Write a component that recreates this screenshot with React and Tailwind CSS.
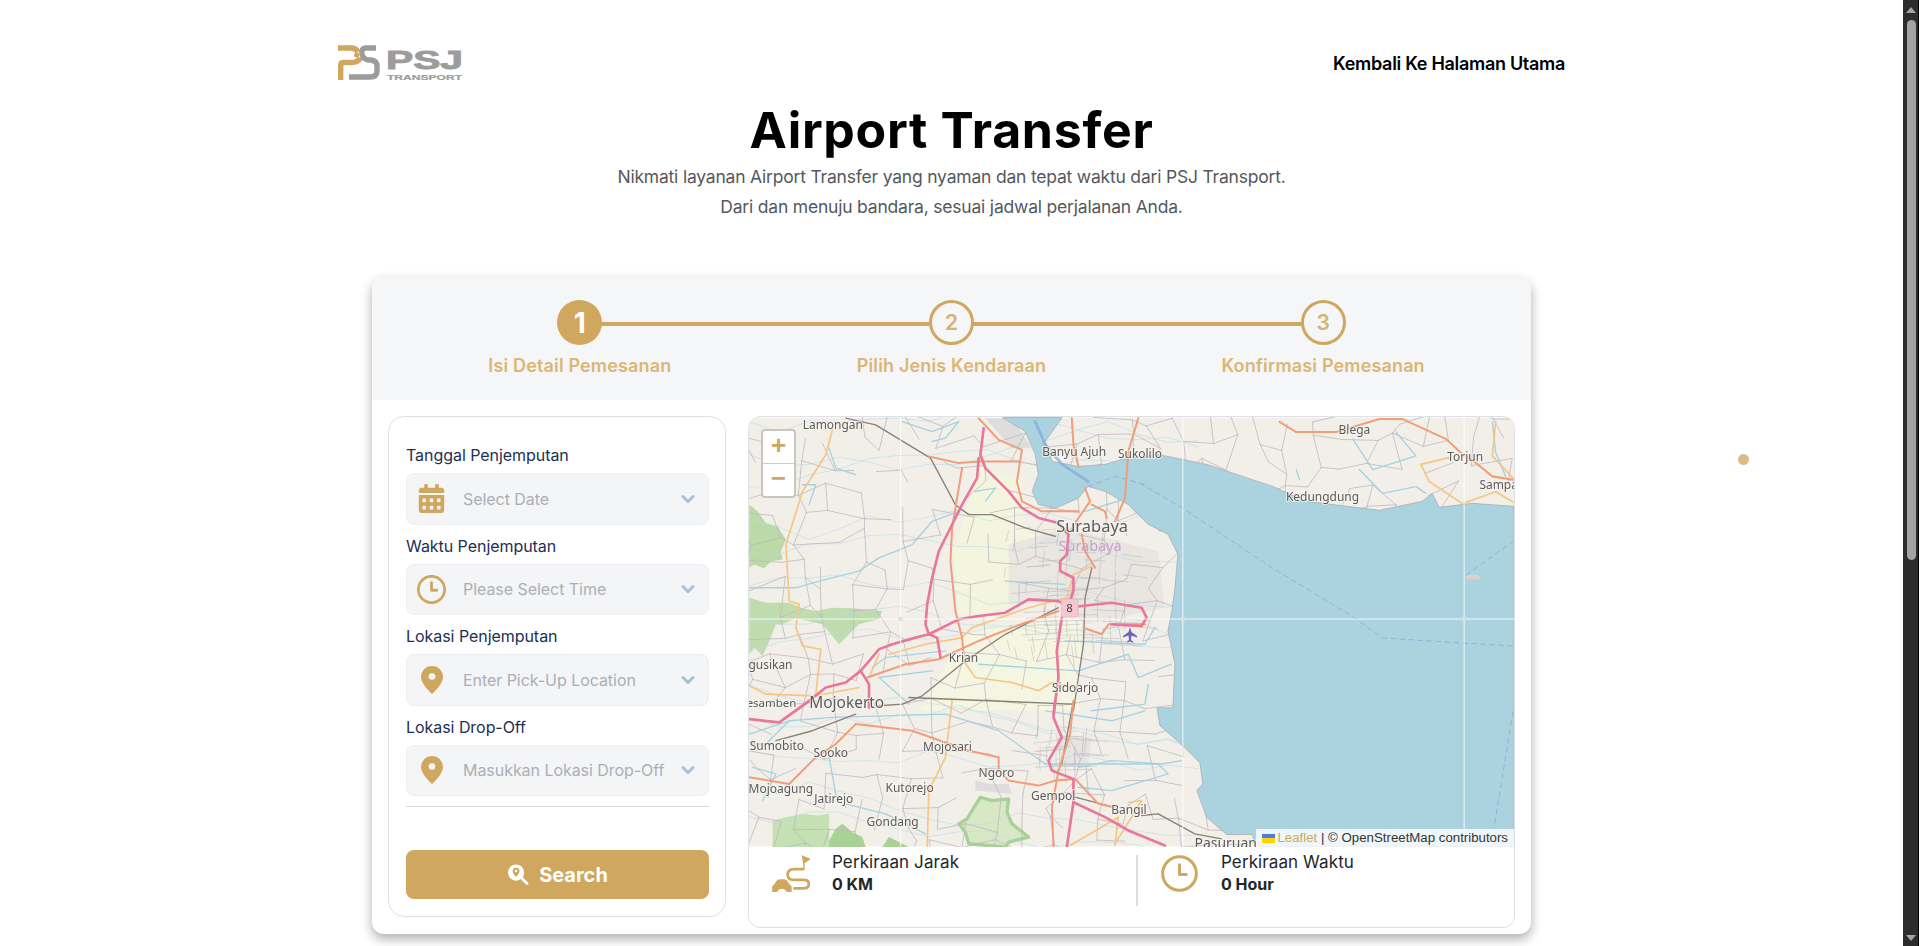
import { ChevronDown } from 'lucide-react';
import { FaCalendarAlt } from 'react-icons/fa';

const GOLD = '#cfa75e';

// map traced from the tiles, coords are 3x zoom crops (see groups below)
const motorways = [
  'M715 50 L705 130 L720 170 L790 240 L830 290 L880 320 L940 335 L970 370 L965 430 L945 450 L945 480 L985 500 L985 540 L975 570',
  'M700 140 L695 200 L650 280 L610 360 L580 420 L560 500 L545 580 L540 640 L550 670',
  'M150 900 L190 870 L240 830 L300 815 L345 780 L400 715 L440 700 L510 680 L550 670 L640 625 L700 615 L780 605 L850 565 L940 570 L975 590 L1010 585 L1100 575 L1190 590 L1205 620 L1190 645 L1100 640',
  'M550 670 L575 680 L585 740',
  'M345 780 L370 820 L370 890',
  'M950 620 L935 720 L940 800 L925 910',
];
const motorways2 = [
  'M10 55 L100 65 L190 0',
  'M930 0 L925 50 L950 110 L910 180 L920 210 L985 235 L985 305 L1080 350 L1150 390 L1260 435',
  'M985 305 L965 440',
];
const primary = [
  'M700 20 L760 85 L830 115 L815 210 L830 270 L890 300 L1000 300',
  'M550 135 L640 155 L700 150 L820 150',
  'M650 170 L620 350 L615 450 L630 600 L650 680 L655 740',
  'M1040 280 L1080 300 L1085 320',
  'M980 20 L985 100 L1000 165',
  'M1180 20 L1150 120 L1140 260 L1110 330',
  'M1020 230 L1035 270 L1000 320 L975 360',
  'M1010 370 L1020 420 L1050 470',
  'M1015 650 L1070 670 L1090 640 L1200 640',
  'M365 800 L480 760 L580 745 L700 690 L800 650 L940 600',
];
const primary2 = [
  'M330 70 L500 90 L670 150 L760 170 L760 210 L790 240 L880 255 L930 240 L990 235 L1060 310 L1105 320',
  'M330 70 L270 130 L210 170 L130 250 L10 230',
  'M985 0 L975 100 L940 210 L920 320 L925 440',
];
const secondary = [
  'M260 55 L240 130 L170 240 L120 400 L130 570 L160 580 L150 650 L170 705 L225 715 L210 850',
  'M10 825 L60 850 L210 855 L340 830',
  'M400 730 L370 800',
  'M1040 465 L985 490 L965 560 L850 590 L680 650 L650 680 L540 700 L430 730',
  'M655 750 L690 800 L800 815 L880 840 L920 815 L985 830',
];
const secondary2 = [
  'M620 0 L600 170 L550 270 L545 440',
  'M975 435 L1120 350 L1110 435',
  'M1110 430 L1160 350 L1190 300 L1150 305',
];
const rails = [
  'M300 20 L390 40 L555 140 L630 280 L670 310 L740 310 L840 350 L930 375',
  'M1040 470 L1020 560 L1015 700 L1000 800 L985 900',
  'M940 590 L780 670 L660 750 L530 855 L470 880 L400 885',
  'M490 860 L980 880',
];
const rails2 = [
  'M985 0 L950 190',
  'M990 290 L1105 320',
  'M1190 345 L1240 340 L1350 400 L1430 415',
  'M330 40 L200 90 L90 120',
];
const rivers = [
  'M470 30 L560 60 L640 30 L600 80 L560 90',
  'M10 530 L150 530 L220 510 L340 480 L400 440 L500 400 L560 330 L640 300',
  'M690 240 L750 230 L720 270',
  'M250 110 L270 170 L330 190',
  'M170 220 L210 220 L190 280',
  'M700 760 L1000 780 L1150 730 L1180 800 L1280 760',
  'M960 690 L1200 700 L1230 650',
  'M780 510 L960 520',
  'M1020 300 L1150 260',
  'M1040 900 L1200 880 L1210 820',
  'M490 880 L400 800 L560 780',
  'M380 770 L420 740 L600 720',
];
const rivers2 = [
  'M10 100 L130 60 L260 50 L600 40 L760 90 L900 190 L1240 190',
  'M20 200 L90 220 L50 300',
  'M300 310 L420 340 L540 400',
  'M900 30 L1100 60 L1200 30',
  'M1000 200 L1100 180 L1250 190 L1310 180',
  'M1000 260 L1100 270 L1270 220 L1240 190',
  'M250 170 L270 280 L300 320',
  'M130 60 L60 130 L20 130',
];
const labels = [
  ['Lamongan', 832, 423, 12],
  ['Banyu Ajuh', 1074, 450, 12],
  ['Sukolilo', 1140, 452, 12],
  ['Krian', 963, 657, 12],
  ['Ngusikan', 765, 664, 12],
  ['Kesamben', 767, 702, 11.5],
  ['Sidoarjo', 1075, 687, 12],
  ['Sumobito', 776, 745, 12],
  ['Sooko', 830, 752, 12],
  ['Mojosari', 947, 746, 12],
  ['Ngoro', 996, 772, 12],
  ['Mojoagung', 780, 788, 12],
  ['Kutorejo', 909, 787, 12],
  ['Gempol', 1053, 795, 12],
  ['Jatirejo', 833, 798, 12],
  ['Bangil', 1129, 809, 12],
  ['Gondang', 892, 821, 12],
  ['Blega', 1355, 428, 12],
  ['Torjun', 1466, 455, 12],
  ['Sampang', 1507, 483, 12],
  ['Kedungdung', 1323, 495, 12],
  ['Surabaya', 1092, 525, 16.5],
  ['Mojokerto', 846, 702, 15.5],
  ['Pasuruan', 1226, 843, 14],
];

// fixed jitter so the picture does not change between runs
const rnd = (i) => {
  const a = Math.sin(i * 12.9898) * 43758.5453;
  return a - Math.floor(a);
};

// village boundaries, thin net over all the land (sea is painted on top)
const netPoint = (c, r) => [
  748 + c * 27 + (rnd(c * 131 + r * 7) - 0.5) * 20,
  416 + r * 24 + (rnd(c * 17 + r * 211) - 0.5) * 18,
];
const net = (() => {
  let d = '';
  for (let c = 0; c < 30; c++) {
    for (let r = 0; r < 19; r++) {
      const [x, y] = netPoint(c, r);
      if (rnd(c * 53 + r * 29 + 1) > 0.42) {
        const [x2, y2] = netPoint(c + 1, r);
        d += `M${x} ${y} L${x2} ${y2}`;
      }
      if (rnd(c * 71 + r * 37 + 2) > 0.42) {
        const [x2, y2] = netPoint(c, r + 1);
        d += `M${x} ${y} L${x2} ${y2}`;
      }
    }
  }
  return d;
})();

const riverNet = Array.from({ length: 13 }, (_, i) => {
  let y = 420 + i * 33;
  let d = `M748 ${y}`;
  for (let s = 1; s < 16; s++) {
    y += (rnd(i * 40 + s) - 0.5) * 26;
    d += ` L${748 + s * 30} ${y}`;
  }
  return d;
});

// street mesh for the two towns
const mesh = Array.from({ length: 110 }, (_, i) => {
  const r1 = rnd(i + 1);
  const r2 = rnd(i * 6 + 3);
  const town = i < 80;
  const x = town ? 1005 + r1 * 120 : 1030 + r1 * 60;
  const y = town ? 525 + r2 * 125 : 725 + r2 * 45;
  return i % 2
    ? `M${x} ${y} l${14 + r2 * 26} ${r1 * 6 - 3}`
    : `M${x} ${y} l${r2 * 6 - 3} ${10 + r1 * 20}`;
});

const Lines = ({ data, color, width, dash, opacity = 1 }) => (
  <g fill="none" stroke={color} strokeWidth={width} strokeLinejoin="round" strokeLinecap="round" strokeDasharray={dash} opacity={opacity}>
    {data.map((d) => <path key={d} d={d} />)}
  </g>
);

const MapTiles = () => (
  <svg viewBox="748 416 767 430" className="block w-full h-full blur-[0.5px]">
    <rect x="748" y="416" width="767" height="430" fill="#f2efe9" />

    {/* farmland + towns */}
    <g transform="translate(745 410) scale(0.3333)">
      <path d="M700 170 L830 200 L835 340 L960 450 L960 560 L850 570 L700 610 L640 620 L625 420 Z" fill="#f4f5df" />
      <path d="M660 660 L960 610 L1010 640 L1000 900 L520 900 Z" fill="#f5f6e2" />
      <path d="M790 400 L960 350 L1240 420 L1260 590 L1020 640 L950 570 L790 580 Z" fill="#e6e3e0" opacity="0.8" />
      <path d="M720 20 L800 20 L860 110 L800 110 Z" fill="#dfdddb" />
      <path d="M10 280 L35 300 L60 335 L95 345 L120 385 L105 420 L110 445 L75 450 L55 472 L25 460 L10 470 Z" fill="#bcd9a8" />
      <path d="M10 560 L60 575 L130 575 L165 590 L210 600 L260 590 L330 592 L410 600 L400 625 L340 640 L280 700 L230 640 L150 622 L110 640 L90 640 L70 690 L50 735 L25 710 L10 730 Z" fill="#c0dcae" />
    </g>
    <g transform="translate(745 700) scale(0.3333)">
      <path d="M930 100 L1040 110 L1030 190 L950 190 Z" fill="#e6e3e0" />
      <path d="M690 240 L730 250 L790 250 L800 280 L690 270 Z" fill="#dfdddb" />
      <path d="M640 370 L665 355 L680 330 L705 290 L740 300 L790 295 L785 335 L800 370 L850 410 L790 425 L780 440 L670 430 L660 395 Z" fill="#d8e8c4" stroke="#a8d198" strokeWidth="10" strokeLinejoin="round" />
      <path d="M80 360 L120 350 L170 340 L215 345 L250 340 L250 440 L80 440 Z" fill="#c5e0b2" />
      <path d="M250 420 L270 385 L290 370 L320 395 L350 410 L360 440 L250 440 Z" fill="#a9d394" />
      <path d="M410 440 L430 410 L490 440 Z" fill="#a9d394" />
    </g>

    <Lines data={riverNet} color="#b8dde8" width="1" opacity="0.6" />
    <Lines data={[net]} color="#bdb6c1" width="0.9" opacity="0.85" />

    {/* sea */}
    <path
      d="M1002 416 L1025 430 L1035 453 L1038 473 L1032 490 L1038 503 L1055 507 L1078 497 L1088 485 L1105 490 L1128 503 L1148 523 L1168 533 L1178 553 L1175 587 L1172 610 L1168 630 L1175 663 L1173 707 L1157 707 L1160 725 L1183 745 L1200 762 L1203 783 L1197 790 L1207 817 L1227 834 L1253 834 L1255 846 L1515 846 L1515 505 L1473 502 L1440 506 L1433 492 L1423 500 L1380 509 L1307 500 L1273 485 L1207 463 L1178 457 L1158 453 L1122 458 L1105 463 L1078 465 L1052 460 L1045 440 L1062 416 Z"
      fill="#aad3df"
      stroke="#a9a4a8"
      strokeWidth="0.7"
    />
    <ellipse cx="1474" cy="576" rx="8" ry="2.5" fill="#ddd0c8" />
    <Lines data={['M1140 482 L1183 507 L1273 567 L1357 618 L1383 637 L1463 642 L1514 645', 'M1467 574 L1514 540', 'M1514 711 L1495 827', 'M1088 485 L1115 475 L1145 483']} color="#8fb3de" width="1" dash="5 4" />
    <Lines data={['M1035 420 L1045 443 L1062 463 L1088 480']} color="#7fa9e0" width="3" dash="3 2" opacity="0.7" />

    <g transform="translate(745 410) scale(0.3333)">
      <Lines data={rivers} color="#a3d3e2" width="4" />
    </g>
    <g transform="translate(745 700) scale(0.3333)">
      <Lines data={rivers2} color="#a3d3e2" width="4" />
    </g>
    <g transform="translate(1140 410) scale(0.3333 0.3419)">
      <Lines
        data={['M640 80 L700 170 L830 130 L770 60', 'M660 170 L730 240 L830 220 L860 240', 'M470 170 L480 200', 'M1060 30 L1070 120 L1100 190']}
        color="#a3d3e2"
        width="4"
      />
      <Lines data={['M845 155 L930 135', 'M845 155 L870 205 L970 270 L1070 235 L1122 265', 'M1070 30 L1060 130 L1122 195']} color="#f6c583" width="5" />
      <Lines data={['M420 30 L470 60 L590 60 L720 22 L790 22 L920 80 L970 125 L1010 150 L1060 190 L1122 200']} color="#f29d7a" width="6" />
    </g>
    <Lines data={mesh} color="#a7a3ad" width="0.7" opacity="0.55" />

    <g transform="translate(745 410) scale(0.3333)">
      <Lines data={secondary} color="#f6c583" width="5" />
      <Lines data={rails} color="#8b8078" width="4" />
      <Lines data={primary} color="#f29d7a" width="6" />
      <Lines data={motorways} color="#e8789a" width="8" />
    </g>
    <g transform="translate(745 700) scale(0.3333)">
      <Lines data={secondary2} color="#f6c583" width="5" />
      <Lines data={rails2} color="#8b8078" width="4" />
      <Lines data={primary2} color="#f29d7a" width="6" />
      <Lines data={motorways2} color="#e8789a" width="8" />
    </g>

    {/* tile seams */}
    <g stroke="#ffffff" strokeWidth="1" opacity="0.85">
      <path d="M900 416 V846 M1183 416 V846 M1465 416 V846 M748 618 H1515" />
    </g>
    <g fill="#dddddd" opacity="0.9">
      <circle cx="900" cy="618" r="2.5" />
      <circle cx="1183" cy="618" r="2.5" />
      <circle cx="1465" cy="618" r="2.5" />
    </g>

    {/* road shield + airport */}
    <rect x="1061" y="598" width="17" height="18" rx="2" fill="#f4c8d0" stroke="#e3a9b5" strokeWidth="0.6" />
    <text x="1069.5" y="611" textAnchor="middle" fontSize="11.5" fill="#5c3a44" fontFamily="'Noto Sans', sans-serif">8</text>
    <path d="M1130 626 L1131.5 631 L1137 635 V636.5 L1131.5 634.5 L1131 639 L1133 640.5 V641.5 L1130 640.6 L1127 641.5 V640.5 L1129 639 L1128.5 634.5 L1123 636.5 V635 L1128.5 631 Z" fill="#6d62c4" />

    <g fontFamily="'Noto Sans', sans-serif" fill="#5a5a5a" stroke="#f7f5f0" strokeWidth="2" strokeOpacity="0.8" style={{ paintOrder: 'stroke' }} textAnchor="middle">
      {labels.map(([name, x, y, size]) => (
        <text key={name} x={x} y={y + size * 0.35} fontSize={size}>{name}</text>
      ))}
      <text x="1090" y="550" fontSize="14.5" fill="#c6a3cb" stroke="none">Surabaya</text>
    </g>
  </svg>
);

const Logo = () => (
  <svg viewBox="0 0 127 38" className="w-[127px] h-[38px] block">
    <g fill="none" strokeWidth="5.4">
      <path d="M0 3 H13 Q18 3 20 7" stroke={GOLD} />
      <path d="M2.700 35 V20 Q2.700 17.500 6 17.500 H13 Q20 17.500 22.500 13" stroke={GOLD} />
      <path d="M38 3 H28 Q23 3 24 9 Q25 14 30 15 H33 Q39 16 39 21 V26 Q39 32 32 32 H11" stroke="#9c9c9c" />
    </g>
    <circle cx="18.700" cy="10" r="2.600" fill={GOLD} />
    <text x="48" y="24" fontSize="25" fontWeight="900" fill="#9c9c9c" stroke="#9c9c9c" strokeWidth="0.9" fontFamily="'Liberation Sans', sans-serif" textLength="77" lengthAdjust="spacingAndGlyphs">PSJ</text>
    <text x="49" y="35" fontSize="7.5" fontWeight="700" fill="#9c9c9c" stroke="#9c9c9c" strokeWidth="0.2" fontFamily="'Liberation Sans', sans-serif" textLength="75" lengthAdjust="spacingAndGlyphs">TRANSPORT</text>
  </svg>
);

const Pin = () => (
  <svg viewBox="0 0 22 28" className="w-[22px] h-[28px]">
    <path d="M11 0a11 11 0 0 0-11 11c0 7.500 11 17 11 17s11-9.500 11-17A11 11 0 0 0 11 0z" fill={GOLD} />
    <circle cx="11" cy="10.500" r="3.300" fill="#f3f5f7" />
  </svg>
);

const ClockIcon = ({ size = 29, stroke = 2.8 }) => (
  <svg viewBox="0 0 38 38" width={size} height={size} fill="none" stroke={GOLD} strokeLinecap="round" strokeLinejoin="round">
    <circle cx="19" cy="19" r="17.300" strokeWidth={stroke * (38 / size)} />
    <path d="M19 10 V20 H26" strokeWidth={stroke * (38 / size)} />
  </svg>
);

const RouteIcon = () => (
  <svg viewBox="0 0 112 110" className="w-[38px] h-[37px]">
    <path d="M88 2 L112 12 L95 24 V42" fill={GOLD} stroke={GOLD} strokeWidth="3" strokeLinejoin="round" />
    <path d="M92 42 H66 Q46 42 46 58 Q46 74 64 74 H94 Q109 74 109 86 Q109 99 94 99 H66" fill="none" stroke={GOLD} strokeWidth="8" strokeLinecap="round" />
    <path d="M0 110 V96 Q0 90 6 88 L14 76 Q18 72 24 72 H36 Q42 72 45 77 L52 88 Q58 90 58 97 V110 H44 Q38 100 29 100 Q20 100 14 110 Z" fill={GOLD} />
  </svg>
);

const SearchIcon = () => (
  <svg viewBox="0 0 22 22" className="w-[22px] h-[21px]">
    <path d="M15 15 L20.500 20.500" stroke="#fff" strokeWidth="2.800" strokeLinecap="round" />
    <circle cx="9" cy="9" r="8.500" fill="#fff" />
    <path d="M9 3.800a3.600 3.600 0 0 0-3.600 3.600c0 2.600 3.600 6.200 3.600 6.200s3.600-3.600 3.600-6.200A3.600 3.600 0 0 0 9 3.800z" fill={GOLD} />
    <circle cx="9" cy="7.400" r="1.300" fill="#fff" />
  </svg>
);

const steps = ['Isi Detail Pemesanan', 'Pilih Jenis Kendaraan', 'Konfirmasi Pemesanan'];

const fields = [
  { label: 'Tanggal Penjemputan', placeholder: 'Select Date', icon: <FaCalendarAlt size={29} color={GOLD} /> },
  { label: 'Waktu Penjemputan', placeholder: 'Please Select Time', icon: <ClockIcon /> },
  { label: 'Lokasi Penjemputan', placeholder: 'Enter Pick-Up Location', icon: <Pin /> },
  { label: 'Lokasi Drop-Off', placeholder: 'Masukkan Lokasi Drop-Off', icon: <Pin /> },
];

const App = () => {
  return (
    <div className="relative flex h-[946px] overflow-hidden bg-white font-['Inter',sans-serif]">
      <main className="flex-1 min-w-0">
        <header className="w-[1227px] mx-auto flex justify-between items-start pt-[45px] h-[100px]">
          <Logo />
          <a href="#" className="mt-[8px] text-[18px] leading-[22px] font-semibold tracking-[-0.3px] text-black">Kembali Ke Halaman Utama</a>
        </header>

        <div className="text-center">
          <h1 className="text-[50px] leading-[60px] font-bold tracking-[0.7px] text-black">Airport Transfer</h1>
          <p className="mt-[2px] text-[17.5px] leading-[30px] tracking-[-0.2px] text-[#55585c]">
            Nikmati layanan Airport Transfer yang nyaman dan tepat waktu dari PSJ Transport.
            <br />
            Dari dan menuju bandara, sesuai jadwal perjalanan Anda.
          </p>
        </div>

        <section className="mt-[55px] w-[1159px] h-[657px] mx-auto rounded-xl bg-white shadow-[0_5px_12px_rgba(0,0,0,0.32)] overflow-hidden">
          <div className="h-[123px] bg-[#f4f6f8] px-[22px] pt-[23px] grid grid-cols-3">
            {steps.map((title, i) => (
              <div key={title} className="relative flex flex-col items-center">
                {i < 2 && <div className="absolute top-[22px] left-1/2 w-full h-[4px] bg-[#cfa75e]" />}
                {i === 0 ? (
                  <div className="relative size-[45px] rounded-full bg-[#cfa75e] flex items-center justify-center text-[28px] font-bold text-white">1</div>
                ) : (
                  <div className="relative size-[45px] rounded-full bg-[#f4f6f8] border-[3px] border-[#cfa75e] flex items-center justify-center text-[21px] font-semibold text-[#d6b274]">{i + 1}</div>
                )}
                <div className="mt-[9px] text-[18px] leading-[24px] font-semibold tracking-[0.15px] text-[#dcb675]">{title}</div>
              </div>
            ))}
          </div>

          <div className="flex gap-[22px] pt-[16px] px-[16px]">
            <div className="w-[338px] h-[501px] rounded-2xl border border-[#dee1e5] pl-[17px] pr-[16px] pt-[20px]">
              {fields.map((f) => (
                <div key={f.label} className="mb-[3px]">
                  <div className="h-[36px] flex items-center text-[16px] tracking-[-0.05px] text-[#1c2f55]">{f.label}</div>
                  <div className="h-[51.5px] rounded-lg bg-[#f3f5f7] border border-[#eceef1] flex items-center pl-[10px] pr-[10px]">
                    <div className="w-[29px] flex justify-center">{f.icon}</div>
                    <span className="ml-[17px] flex-1 text-[16px] tracking-[-0.05px] text-[#abafb5] whitespace-nowrap">{f.placeholder}</span>
                    <ChevronDown size={20} strokeWidth={3.5} color="#a9c2d2" />
                  </div>
                </div>
              ))}
              <div className="mt-[10px] h-px bg-[#d9dcdf]" />
              <button className="mt-[43px] w-full h-[49px] rounded-lg bg-[#cfa75e] flex items-center justify-center gap-[10px] text-[20px] font-bold text-white">
                <SearchIcon />
                Search
              </button>
            </div>

            <div className="w-[767px] h-[512px] rounded-xl border border-[#dee1e5] overflow-hidden">
              <div className="relative h-[430px]">
                <MapTiles />
                <div className="absolute left-[12px] top-[12px] w-[35px] rounded bg-white border-2 border-[#c9c6c0] text-[#cfa75e] font-['Liberation_Mono',monospace] font-bold text-[26px]">
                  <div className="h-[33px] flex items-center justify-center border-b border-[#cccccc]">+</div>
                  <div className="h-[32px] flex items-center justify-center">−</div>
                </div>
                <div className="absolute right-0 bottom-0 h-[18px] px-[6px] bg-white/80 flex items-center gap-[3px] text-[13.25px] text-[#333333] font-['Liberation_Sans',sans-serif]">
                  <span className="w-[13px] h-[9px] flex flex-col">
                    <span className="flex-1 bg-[#4c7be1]" />
                    <span className="flex-1 bg-[#ffd500]" />
                  </span>
                  <span><span className="text-[#cfa75e]">Leaflet</span> | © OpenStreetMap contributors</span>
                </div>
              </div>

              <div className="flex pt-[8px]">
                <div className="w-[389px] h-[51px] flex items-start pl-[23px] border-r-2 border-[#dcdcdc]">
                  <RouteIcon />
                  <div className="ml-[22px] -mt-[3px]">
                    <div className="text-[17px] leading-[20px] tracking-[0.1px] text-[#23252b]">Perkiraan Jarak</div>
                    <div className="mt-[2px] text-[16px] leading-[20px] font-bold text-[#23252b]">0 KM</div>
                  </div>
                </div>
                <div className="flex-1 flex items-start pl-[23px]">
                  <ClockIcon size={37} stroke={3} />
                  <div className="ml-[23px] -mt-[3px]">
                    <div className="text-[17px] leading-[20px] tracking-[0.1px] text-[#23252b]">Perkiraan Waktu</div>
                    <div className="mt-[2px] text-[16px] leading-[20px] font-bold text-[#23252b]">0 Hour</div>
                  </div>
                </div>
              </div>
            </div>
          </div>
        </section>
      </main>

      {/* page scrollbar from the screenshot */}
      <aside className="w-[16px] h-full flex flex-col items-start bg-[#2c2c2c] border-r border-black">
        <div className="mx-auto mt-[7px] w-0 h-0 border-x-[5.5px] border-x-transparent border-b-[6px] border-b-[#a3a3a3]" />
        <div className="ml-[4px] mt-[7px] w-[9px] h-[540px] rounded-full bg-[#a3a3a3]" />
        <div className="mx-auto mt-auto mb-[5px] w-0 h-0 border-x-[5.5px] border-x-transparent border-t-[6px] border-t-[#a3a3a3]" />
      </aside>

      <div className="absolute left-[1738px] top-[454px] size-[11px] rounded-full bg-[#dcbc86]" />
    </div>
  );
};

export default App;
